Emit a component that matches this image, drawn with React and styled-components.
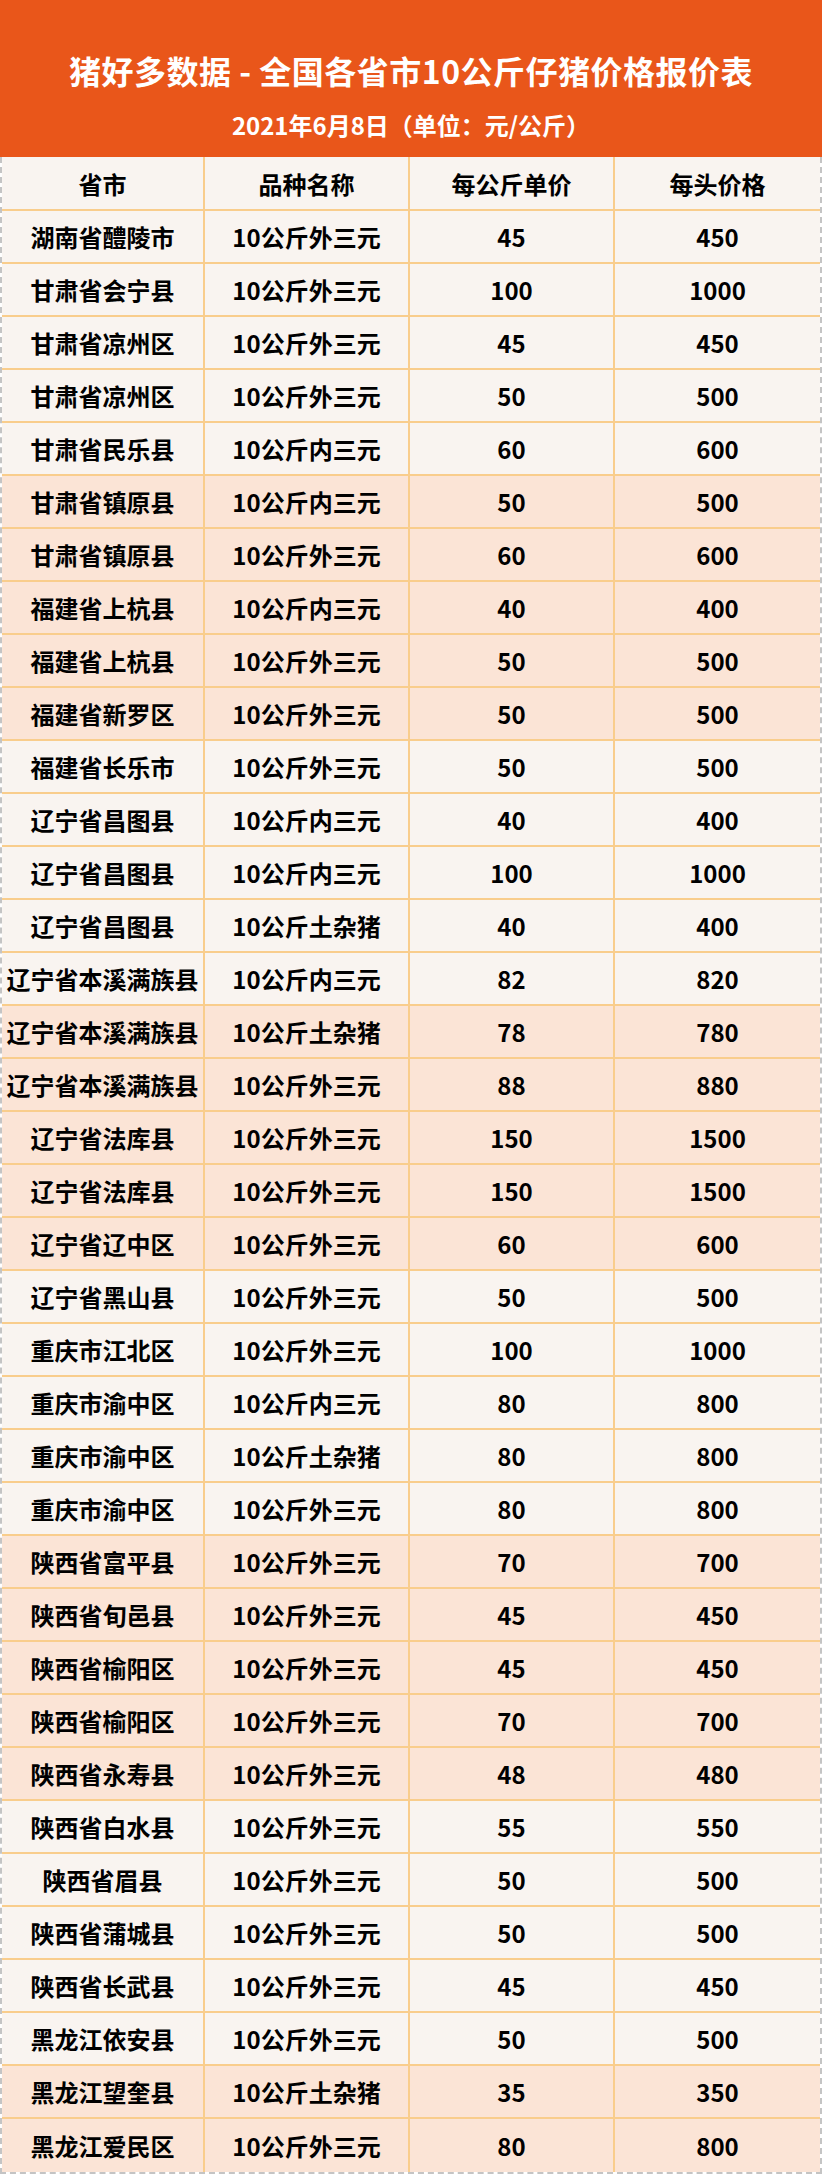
import React from 'react'
import styled, { createGlobalStyle } from 'styled-components'

const GlobalStyle = createGlobalStyle`
  html, body {
    margin: 0;
    padding: 0;
    background: #ffffff;
  }
  body {
    font-family: "Noto Sans CJK SC", "Noto Sans", sans-serif;
  }
`

const rows = [
  ['湖南省醴陵市', '10公斤外三元', '45', '450'],
  ['甘肃省会宁县', '10公斤外三元', '100', '1000'],
  ['甘肃省凉州区', '10公斤外三元', '45', '450'],
  ['甘肃省凉州区', '10公斤外三元', '50', '500'],
  ['甘肃省民乐县', '10公斤内三元', '60', '600'],
  ['甘肃省镇原县', '10公斤内三元', '50', '500'],
  ['甘肃省镇原县', '10公斤外三元', '60', '600'],
  ['福建省上杭县', '10公斤内三元', '40', '400'],
  ['福建省上杭县', '10公斤外三元', '50', '500'],
  ['福建省新罗区', '10公斤外三元', '50', '500'],
  ['福建省长乐市', '10公斤外三元', '50', '500'],
  ['辽宁省昌图县', '10公斤内三元', '40', '400'],
  ['辽宁省昌图县', '10公斤内三元', '100', '1000'],
  ['辽宁省昌图县', '10公斤土杂猪', '40', '400'],
  ['辽宁省本溪满族县', '10公斤内三元', '82', '820'],
  ['辽宁省本溪满族县', '10公斤土杂猪', '78', '780'],
  ['辽宁省本溪满族县', '10公斤外三元', '88', '880'],
  ['辽宁省法库县', '10公斤外三元', '150', '1500'],
  ['辽宁省法库县', '10公斤外三元', '150', '1500'],
  ['辽宁省辽中区', '10公斤外三元', '60', '600'],
  ['辽宁省黑山县', '10公斤外三元', '50', '500'],
  ['重庆市江北区', '10公斤外三元', '100', '1000'],
  ['重庆市渝中区', '10公斤内三元', '80', '800'],
  ['重庆市渝中区', '10公斤土杂猪', '80', '800'],
  ['重庆市渝中区', '10公斤外三元', '80', '800'],
  ['陕西省富平县', '10公斤外三元', '70', '700'],
  ['陕西省旬邑县', '10公斤外三元', '45', '450'],
  ['陕西省榆阳区', '10公斤外三元', '45', '450'],
  ['陕西省榆阳区', '10公斤外三元', '70', '700'],
  ['陕西省永寿县', '10公斤外三元', '48', '480'],
  ['陕西省白水县', '10公斤外三元', '55', '550'],
  ['陕西省眉县', '10公斤外三元', '50', '500'],
  ['陕西省蒲城县', '10公斤外三元', '50', '500'],
  ['陕西省长武县', '10公斤外三元', '45', '450'],
  ['黑龙江依安县', '10公斤外三元', '50', '500'],
  ['黑龙江望奎县', '10公斤土杂猪', '35', '350'],
  ['黑龙江爱民区', '10公斤外三元', '80', '800'],
]

const Page = styled.div`
  width: 822px;
  color: #000;
`

const Banner = styled.header`
  height: 157px;
  background: #e9561a;
  color: #ffffff;
  display: flex;
  flex-direction: column;
  align-items: center;
  box-sizing: border-box;
  padding-top: 48px;
`

const Title = styled.h1`
  margin: 0;
  font-size: 32px;
  line-height: 44px;
  font-weight: 700;
  letter-spacing: 0.5px;
`

const Subtitle = styled.div`
  margin-top: 18px;
  font-size: 24px;
  line-height: 30px;
  font-weight: 700;
`

const Table = styled.div`
  border-left: 2px dashed #c4c4c4;
  border-right: 2px dashed #c4c4c4;
  border-bottom: 2px dashed #c4c4c4;
`

const Row = styled.div`
  display: grid;
  grid-template-columns: 203px 205px 205px 1fr;
  height: ${({ $head }) => ($head ? '54px' : '53px')};
  box-sizing: border-box;
  border-bottom: ${({ $last }) => ($last ? 'none' : '2px solid #f9cd8c')};
  background: ${({ $pink }) => ($pink ? '#fbe4d6' : '#f9f4f0')};
`

const Cell = styled.div`
  display: flex;
  align-items: center;
  justify-content: center;
  border-right: 2px solid #f9cd8c;
  font-size: 24px;
  font-weight: 700;
  white-space: nowrap;
  overflow: hidden;

  &:last-child {
    border-right: none;
  }
`

export default function App() {
  return (
    <Page>
      <GlobalStyle />
      <Banner>
        <Title>猪好多数据 - 全国各省市10公斤仔猪价格报价表</Title>
        <Subtitle>2021年6月8日（单位：元/公斤）</Subtitle>
      </Banner>
      <Table>
        <Row $head>
          <Cell>省市</Cell>
          <Cell>品种名称</Cell>
          <Cell>每公斤单价</Cell>
          <Cell>每头价格</Cell>
        </Row>
        {rows.map((r, i) => (
          <Row key={i} $pink={Math.floor(i / 5) % 2 === 1} $last={i === rows.length - 1}>
            {r.map((c, j) => (
              <Cell key={j}>{c}</Cell>
            ))}
          </Row>
        ))}
      </Table>
    </Page>
  )
}
